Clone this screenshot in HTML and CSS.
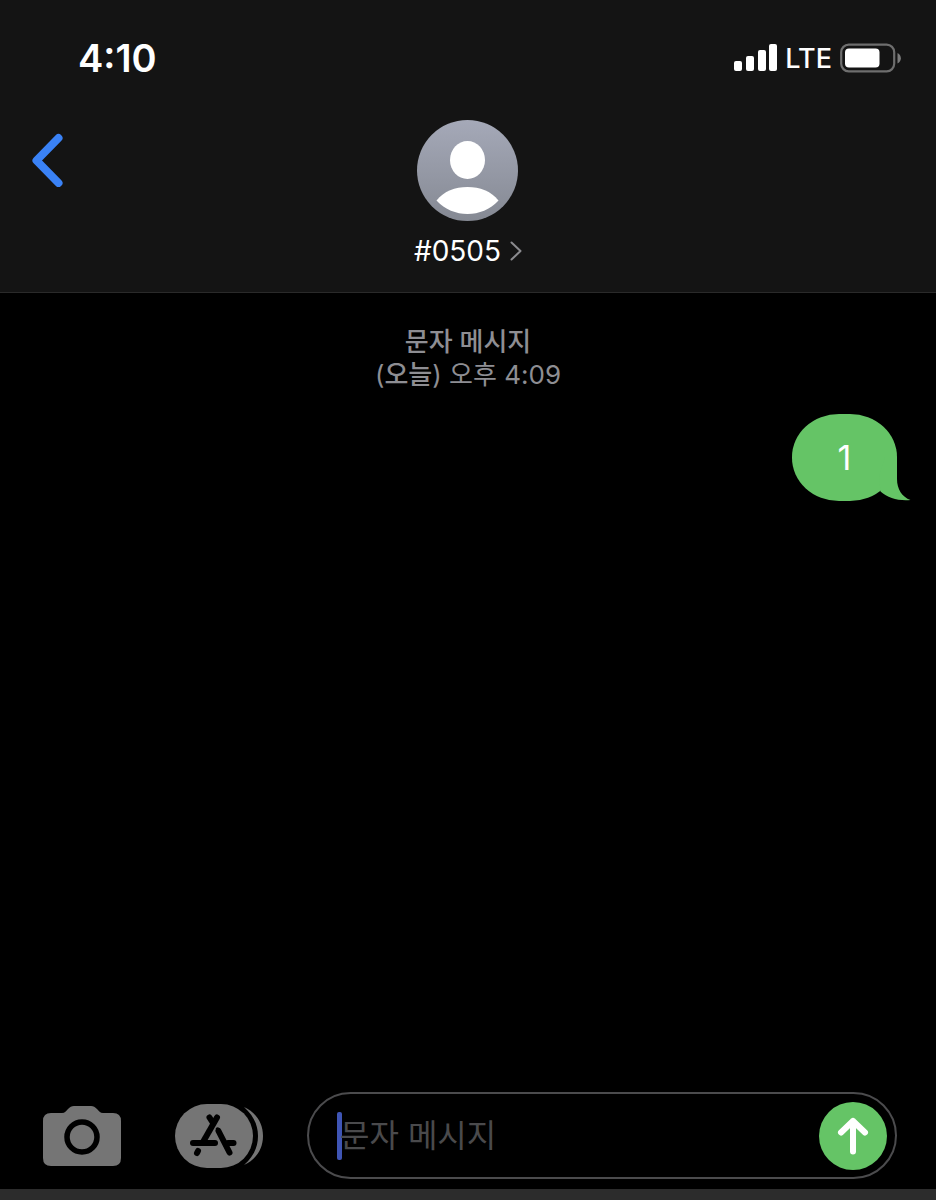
FILE: index.html
```html
<!DOCTYPE html>
<html lang="ko">

<head>
    <meta charset="UTF-8">
    <meta name="viewport" content="width=device-width, initial-scale=1.0">
    <title>문자 메시지</title>
    <link rel="stylesheet" href="styles.css">
</head>

<body>
    <header class="header">
        <div class="status">
            <span class="clock">4:10</span>
            <div class="status-icons">
                <svg class="signal" viewBox="0 0 43 28" aria-hidden="true">
                    <rect x="0" y="17" width="8" height="10" rx="2" />
                    <rect x="12" y="12" width="8" height="15" rx="2" />
                    <rect x="24" y="6" width="8" height="21" rx="2" />
                    <rect x="35" y="0" width="8" height="27" rx="2" />
                </svg>
                <span class="network">LTE</span>
                <svg class="battery" viewBox="0 0 61 30" aria-hidden="true">
                    <rect x="1.2" y="1.7" width="53" height="26.6" rx="7.5" fill="none" stroke="#6e6e6e" stroke-width="2.2" />
                    <rect x="5" y="5.5" width="34.5" height="19" rx="4" fill="#fff" />
                    <path d="M57.5 10c4.5 2 4.5 8.5 0 10.5z" fill="#7b7b7b" />
                </svg>
            </div>
        </div>

        <nav class="nav">
            <button class="back" type="button" aria-label="뒤로">
                <svg viewBox="0 0 32 54" aria-hidden="true">
                    <path d="M27.5 5L5.5 27.5L27.5 50" />
                </svg>
            </button>
            <a class="contact" href="#">
                <svg class="avatar" viewBox="0 0 101 101" aria-hidden="true">
                    <defs>
                        <linearGradient id="avatarFill" x1="0" y1="0" x2="0" y2="1">
                            <stop offset="0" stop-color="#a5a9b8" />
                            <stop offset="1" stop-color="#858993" />
                        </linearGradient>
                    </defs>
                    <circle cx="50.5" cy="50.5" r="50.5" fill="url(#avatarFill)" />
                    <ellipse cx="50.5" cy="40" rx="17.5" ry="19" fill="#fff" />
                    <path d="M19.5 80.5C27 71 38 67 50.5 67S74 71 81.5 80.5C73 89.5 62 94 50.5 94S28 89.5 19.5 80.5z" fill="#fff" />
                </svg>
                <span class="contact-name">
                    #0505
                    <svg class="chevron" viewBox="0 0 12 20" aria-hidden="true">
                        <path d="M1.5 1.5L10.5 10L1.5 18.5" />
                    </svg>
                </span>
            </a>
            <span></span>
        </nav>
    </header>

    <main class="messages">
        <p class="date"><b>문자 메시지</b><br>(<b>오늘</b>) 오후 4:09</p>
        <div class="bubble">
            1
            <svg class="tail" viewBox="0 0 32 44" aria-hidden="true">
                <path d="M6 0H18V22C18 32 23 40 31.5 43C19 44 9 41 1.5 34.5L0 18z" />
            </svg>
        </div>
    </main>

    <form class="compose">
        <button class="icon-button" type="button" aria-label="카메라">
            <svg class="camera" viewBox="0 0 78 60" aria-hidden="true">
                <path d="M8 7H19C22 7 23 5 25 3C27 1 28.5 0 31 0H48C50.5 0 52 1 54 3C56 5 57 7 60 7H70Q78 7 78 15V52Q78 60 70 60H8Q0 60 0 52V15Q0 7 8 7z" fill="#757575" />
                <circle cx="39" cy="31" r="15" fill="none" stroke="#000" stroke-width="5.5" />
            </svg>
        </button>
        <button class="icon-button" type="button" aria-label="앱">
            <svg class="apps" viewBox="0 0 88 64" aria-hidden="true">
                <path d="M69 3C80 8 88 18 88 32S80 56 69 61C78 53 83 43.5 83 32S78 11 69 3z" fill="#757575" />
                <rect x="0" y="0" width="78" height="64" rx="32" fill="#757575" />
                <g fill="none" stroke="#000" stroke-width="6" stroke-linecap="round">
                    <path d="M42 13.5L28 38" />
                    <path d="M34.5 13.5L38 19" />
                    <path d="M18 39H40" />
                    <path d="M53 39H58.5" />
                    <path d="M43.5 27L54.5 48.5" />
                    <path d="M42.5 25L45 29" stroke-width="3.5" />
                    <path d="M23 47L22 49" />
                </g>
            </svg>
        </button>
        <div class="field">
            <span class="caret"></span>
            <input class="field-input" type="text" placeholder="문자 메시지" aria-label="문자 메시지">
            <button class="send" type="submit" aria-label="보내기">
                <svg viewBox="0 0 32 38" aria-hidden="true">
                    <path d="M16 34.5V4M4 15.5L16 4L28 15.5" />
                </svg>
            </button>
        </div>
    </form>
    <div class="keyboard-edge"></div>
</body>

</html>
```
FILE: styles.css
```css
* {
    box-sizing: border-box;
}

body {
    margin: 0;
    min-height: 100vh;
    display: flex;
    flex-direction: column;
    background-color: #000;
    color: #fff;
    font-family: Inter, "Noto Sans CJK KR", sans-serif;
}

button {
    padding: 0;
    border: none;
    background: none;
    cursor: pointer;
}

svg {
    display: block;
}

.header {
    background-color: #141414;
    border-bottom: 1px solid #2a2a2a;
    padding-bottom: 24px;
}

.status {
    display: flex;
    justify-content: space-between;
    align-items: center;
    height: 116px;
    padding: 0 35px 0 78px;
}

.clock {
    font-size: 38px;
    font-weight: 600;
}

.status-icons {
    display: flex;
    align-items: center;
    gap: 8px;
}

.signal {
    width: 43px;
    height: 28px;
    fill: #fff;
}

.network {
    font-size: 27px;
    font-weight: 500;
}

.battery {
    width: 61px;
    height: 30px;
}

.nav {
    display: grid;
    grid-template-columns: 1fr auto 1fr;
    align-items: start;
    padding: 4px 31px 0;
}

.back {
    justify-self: start;
    margin-top: 13px;
}

.back svg {
    width: 32px;
    height: 54px;
    fill: none;
    stroke: #3a82f6;
    stroke-width: 8px;
    stroke-linecap: round;
    stroke-linejoin: round;
}

.contact {
    display: flex;
    flex-direction: column;
    align-items: center;
    gap: 13px;
    color: #fff;
    text-decoration: none;
}

.avatar {
    width: 101px;
    height: 101px;
}

.contact-name {
    display: flex;
    align-items: center;
    gap: 9px;
    font-size: 28px;
    line-height: 34px;
}

.chevron {
    width: 12px;
    height: 20px;
    fill: none;
    stroke: #8b8b8f;
    stroke-width: 2px;
    stroke-linecap: round;
    stroke-linejoin: round;
}

.messages {
    flex: 1;
    display: flex;
    flex-direction: column;
    padding: 32px 39px 0;
}

.date {
    margin: 0 0 23px;
    text-align: center;
    color: #8e8e93;
    font-size: 26px;
    line-height: 33px;
}

.date b {
    font-weight: 500;
}

.bubble {
    position: relative;
    align-self: flex-end;
    min-width: 105px;
    padding: 20px 40px;
    border-radius: 47px / 43px;
    background-color: #65c466;
    font-size: 34px;
    line-height: 47px;
    text-align: center;
}

.tail {
    position: absolute;
    right: -14px;
    bottom: 0;
    width: 32px;
    height: 44px;
    fill: #65c466;
}

.compose {
    display: flex;
    align-items: center;
    gap: 54px;
    padding: 0 39px 10px 43px;
}

.camera {
    width: 78px;
    height: 60px;
}

.apps {
    width: 88px;
    height: 64px;
}

.field {
    flex: 1;
    display: flex;
    align-items: center;
    min-width: 0;
    height: 87px;
    margin-left: -10px;
    padding: 0 8px 0 28px;
    border: 2px solid #4b4b4d;
    border-radius: 44px;
}

.caret {
    width: 5px;
    height: 48px;
    border-radius: 2px;
    background-color: #3f55b5;
}

.field-input {
    flex: 1;
    min-width: 0;
    margin-left: -2px;
    padding: 0;
    border: none;
    outline: none;
    background: none;
    color: #fff;
    font-family: inherit;
    font-size: 32px;
}

.field-input::placeholder {
    color: #4a4a4c;
    opacity: 1;
}

.send {
    display: flex;
    justify-content: center;
    align-items: center;
    width: 68px;
    height: 68px;
    border-radius: 50%;
    background-color: #65c466;
}

.send svg {
    width: 32px;
    height: 38px;
    fill: none;
    stroke: #fff;
    stroke-width: 6px;
    stroke-linecap: round;
    stroke-linejoin: round;
}

.keyboard-edge {
    height: 11px;
    background-color: #2c2c2c;
}
```
